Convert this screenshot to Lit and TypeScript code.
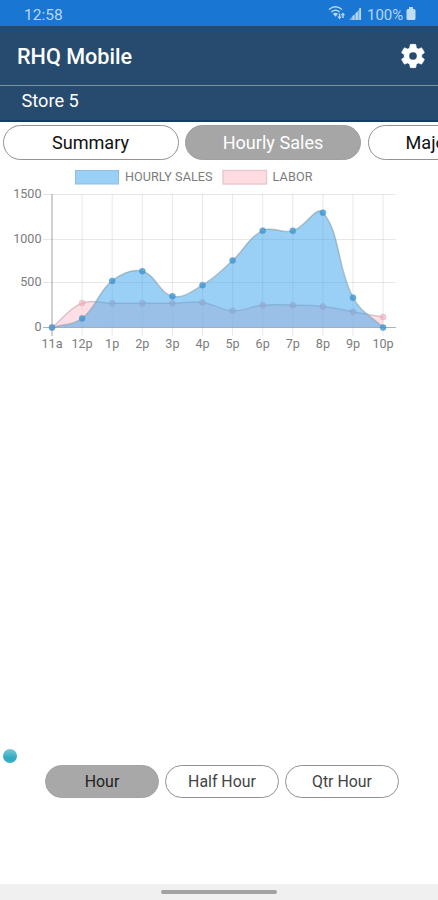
import { LitElement, html, svg, css } from "lit";
import { customElement, state } from "lit/decorators.js";
import { classMap } from "lit/directives/class-map.js";

type Point = { x: number; y: number };

const HOURS = ["11a", "12p", "1p", "2p", "3p", "4p", "5p", "6p", "7p", "8p", "9p", "10p"];
const SALES = [0, 102, 525, 635, 352, 477, 755, 1092, 1090, 1295, 336, 0];
const LABOR = [0, 275, 273, 273, 273, 283, 188, 252, 252, 238, 177, 118];

const PLOT = { left: 52, top: 29.5, bottom: 162.5, step: 30.1, right: 396 };
const MAX = 1500;

const toPoints = (values: number[]): Point[] =>
  values.map((v, i) => ({
    x: PLOT.left + i * PLOT.step,
    y: PLOT.bottom - (v / MAX) * (PLOT.bottom - PLOT.top),
  }));

/* Smooth line through the points, control points clamped to the plot area. */
function curve(points: Point[], tension = 0.4): string {
  const clamp = (y: number) => Math.max(PLOT.top, Math.min(PLOT.bottom, y));
  const controls = points.map((p, i) => {
    const prev = points[i - 1] ?? p;
    const next = points[i + 1] ?? p;
    const d01 = Math.hypot(p.x - prev.x, p.y - prev.y);
    const d12 = Math.hypot(next.x - p.x, next.y - p.y);
    const total = d01 + d12 || 1;
    const a = (tension * d01) / total;
    const b = (tension * d12) / total;
    return {
      inX: p.x - a * (next.x - prev.x),
      inY: clamp(p.y - a * (next.y - prev.y)),
      outX: p.x + b * (next.x - prev.x),
      outY: clamp(p.y + b * (next.y - prev.y)),
    };
  });
  let d = `M${points[0].x} ${points[0].y}`;
  for (let i = 1; i < points.length; i++) {
    const c0 = controls[i - 1];
    const c1 = controls[i];
    d += `C${c0.outX} ${c0.outY} ${c1.inX} ${c1.inY} ${points[i].x} ${points[i].y}`;
  }
  return d;
}

@customElement("sales-chart")
export class SalesChart extends LitElement {
  static styles = css`
    :host { display: block; height: 190px; }
    svg { display: block; }
    text { font-family: Roboto, sans-serif; font-size: 12.6px; fill: #7c7c7c; }
    .grid { stroke: #000; stroke-opacity: 0.09; stroke-width: 1; }
    .axis { stroke: #000; stroke-opacity: 0.3; stroke-width: 1.2; }
    .sales-fill { fill: #36a2eb; fill-opacity: 0.5; }
    .labor-fill { fill: #ffc0cb; fill-opacity: 0.5; }
    .sales-line { fill: none; stroke: #8aa5b2; stroke-opacity: 0.65; stroke-width: 1.5; }
    .labor-line { fill: none; stroke: #a08a94; stroke-opacity: 0.4; stroke-width: 1.5; }
    .sales-dot { fill: #3b97d6; fill-opacity: 0.8; stroke: #5f93b8; stroke-opacity: 0.5; }
    .labor-dot { fill: #f3a9b8; fill-opacity: 0.6; stroke: #b98d9b; stroke-opacity: 0.25; }
    .sales-key { fill: #9ad0f5; stroke: #8dbfe0; }
    .labor-key { fill: #ffdbe2; stroke: #e6ccd2; stroke-width: 1.5; }
  `;

  render() {
    const sales = toPoints(SALES);
    const labor = toPoints(LABOR);
    const close = `L${sales[11].x} ${PLOT.bottom}L${PLOT.left} ${PLOT.bottom}Z`;
    return html`
      <svg width="438" height="190" viewBox="0 0 438 190">
        <rect class="sales-key" x="75.5" y="5.5" width="43" height="13.5"></rect>
        <text x="125" y="16" textLength="87.5">HOURLY SALES</text>
        <rect class="labor-key" x="223" y="5.5" width="43.5" height="13.5"></rect>
        <text x="272.5" y="16" textLength="40">LABOR</text>
        ${[1500, 1000, 500, 0].map((v, i) => {
          const y = [29.5, 74.5, 117.5, 162.5][i];
          return svg`
            <line class=${v ? "grid" : "axis"} x1="43" x2=${PLOT.right} y1=${y} y2=${y}></line>
            <text x="41.5" y=${y + 3.5} text-anchor="end">${v}</text>`;
        })}
        ${HOURS.map((hour, i) => {
          const x = sales[i].x;
          return svg`
            <line class=${i ? "grid" : "axis"} x1=${x} x2=${x} y1="29" y2="171"></line>
            <text x=${x} y="183" text-anchor="middle">${hour}</text>`;
        })}
        <path class="labor-fill" d=${curve(labor) + close}></path>
        <path class="labor-line" d=${curve(labor)}></path>
        ${labor.map((p) => svg`<circle class="labor-dot" cx=${p.x} cy=${p.y} r="3"></circle>`)}
        <path class="sales-fill" d=${curve(sales) + close}></path>
        <path class="sales-line" d=${curve(sales)}></path>
        ${sales.map((p) => svg`<circle class="sales-dot" cx=${p.x} cy=${p.y} r="3"></circle>`)}
      </svg>
    `;
  }
}

@customElement("app-root")
export class AppRoot extends LitElement {
  static styles = css`
    :host {
      display: flex;
      flex-direction: column;
      width: 100%;
      height: 900px;
      overflow: hidden;
      background: #fff;
      font-family: Roboto, sans-serif;
      color: #111;
    }
    * { box-sizing: border-box; }
    .status {
      display: flex;
      justify-content: space-between;
      height: 26px;
      flex: none;
      padding: 3px 22px 0 24px;
      background: #1976d3;
      color: #b8d7f5;
      font-size: 15.5px;
      line-height: 24px;
    }
    .indicators { display: flex; }
    .indicators svg { display: block; }
    .level { font-size: 15px; margin-left: 5px; width: 39px; white-space: nowrap; }
    .header {
      display: flex;
      justify-content: space-between;
      align-items: center;
      height: 59px;
      flex: none;
      padding: 0 11px 0 17px;
      background: #264b6e;
      color: #fff;
    }
    .title { font-size: 21.6px; font-weight: 500; line-height: 28px; padding-top: 2px; }
    .store {
      height: 37px;
      flex: none;
      padding-left: 21.5px;
      border-top: 1px solid #7993a5;
      border-bottom: 2px solid #153b69;
      background: #264b6e;
      color: #fff;
      font-size: 18.2px;
      line-height: 30px;
    }
    .tabs { display: flex; gap: 6.5px; height: 43px; flex: none; padding: 3px 0 0 2.5px; }
    button {
      flex: none;
      margin: 0;
      padding: 0;
      border: 1.5px solid #929292;
      border-radius: 20px;
      background: #fff;
      color: #111;
      font-family: inherit;
    }
    .tab { width: 176px; height: 35px; font-size: 18.1px; line-height: 30px; }
    .tab.active { background: #a6a6a6; border-color: #a0a0a0; color: #fff; }
    .tab:last-child { padding-left: 37px; text-align: left; }
    .space { flex: 1; }
    .dot {
      width: 14px;
      height: 14px;
      margin: 0 0 2px 3px;
      border-radius: 50%;
      background: linear-gradient(#7bc9d8, #2fa9bf 65%, #35b3c6);
    }
    .ranges { display: flex; gap: 6px; flex: none; padding: 0 0 86px 45px; }
    .range { width: 114px; height: 33px; font-size: 15.9px; line-height: 29px; color: #444; }
    .range.active { background: #a8a8a8; border-color: #a3a3a3; color: #222; }
    .nav { display: flex; justify-content: center; height: 16px; flex: none; padding-top: 6px; background: #f0f0f0; }
    .handle { width: 116px; height: 4px; border-radius: 2px; background: #a2a2a2; }
  `;

  @state() private tab = "Hourly Sales";
  @state() private range = "Hour";

  render() {
    return html`
      <div class="status">
        <span>12:58</span>
        <div class="indicators">
          <svg width="34" height="20" viewBox="0 0 34 20" fill="none" stroke="#b8d7f5">
            <path stroke-width="1.5" d="M1 6.500Q7.500 1.200 14 6.500M3.400 9Q7.500 5.700 11.600 9"></path>
            <path fill="#b8d7f5" stroke="none" d="M4.800 10.700Q7.500 9 10 10.700L7.500 13.800zM9.300 13.600h1.500v-3h1.400v3h1.500l-2.200 2.900zM12.600 12.200l2.300-2.700 2.300 2.700h-1.500v2.800h-1.500v-2.800z"></path>
            <path fill="#b8d7f5" fill-opacity=".6" stroke="none" d="M21 17L33 4.500V17z"></path>
            <path stroke-width="1.700" d="M25.500 12.500V17M28.900 9.500V17M32.200 5v12"></path>
          </svg>
          <span class="level">100%</span>
          <svg width="10" height="20" viewBox="0 0 10 20"><path fill="#c0dcf7" d="M3 4h4v2h1q1.500 0 1.500 1.500v8Q9.500 17 8 17H2Q.5 17 .5 15.500v-8Q.5 6 2 6h1z"></path></svg>
        </div>
      </div>
      <div class="header">
        <span class="title">RHQ Mobile</span>
        <svg width="28" height="28" viewBox="0 0 24 24" fill="#fff" stroke="#fff" stroke-width=".5" stroke-linejoin="round">
          <path d="M19.430 12.980c.04-.32.07-.64.07-.98s-.03-.66-.07-.98l2.110-1.650c.19-.15.24-.42.12-.64l-2-3.460c-.12-.22-.39-.3-.61-.22l-2.490 1c-.52-.4-1.080-.73-1.690-.98l-.38-2.650C14.460 2.180 14.250 2 14 2h-4c-.25 0-.46.18-.49.42l-.38 2.650c-.61.25-1.170.59-1.690.98l-2.490-1c-.23-.09-.49 0-.61.22l-2 3.460c-.13.22-.07.49.12.64l2.110 1.650c-.04.32-.07.65-.07.98s.03.66.07.98l-2.110 1.650c-.19.15-.24.42-.12.64l2 3.460c.12.22.39.3.61.22l2.490-1c.52.4 1.080.73 1.690.98l.38 2.650c.03.24.24.42.49.42h4c.25 0 .46-.18.49-.42l.38-2.650c.61-.25 1.170-.59 1.690-.98l2.490 1c.23.09.49 0 .61-.22l2-3.460c.12-.22.07-.49-.12-.64zM12 15.500A3.500 3.500 0 1 1 12 8.500a3.500 3.500 0 0 1 0 7z"></path>
        </svg>
      </div>
      <div class="store">Store 5</div>
      <div class="tabs">
        ${["Summary", "Hourly Sales", "Major"].map(
          (name) => html`<button class=${classMap({ tab: true, active: this.tab === name })} @click=${() => (this.tab = name)}>${name}</button>`
        )}
      </div>
      <sales-chart></sales-chart>
      <div class="space"></div>
      <div class="dot"></div>
      <div class="ranges">
        ${["Hour", "Half Hour", "Qtr Hour"].map(
          (name) => html`<button class=${classMap({ range: true, active: this.range === name })} @click=${() => (this.range = name)}>${name}</button>`
        )}
      </div>
      <div class="nav"><div class="handle"></div></div>
    `;
  }
}
